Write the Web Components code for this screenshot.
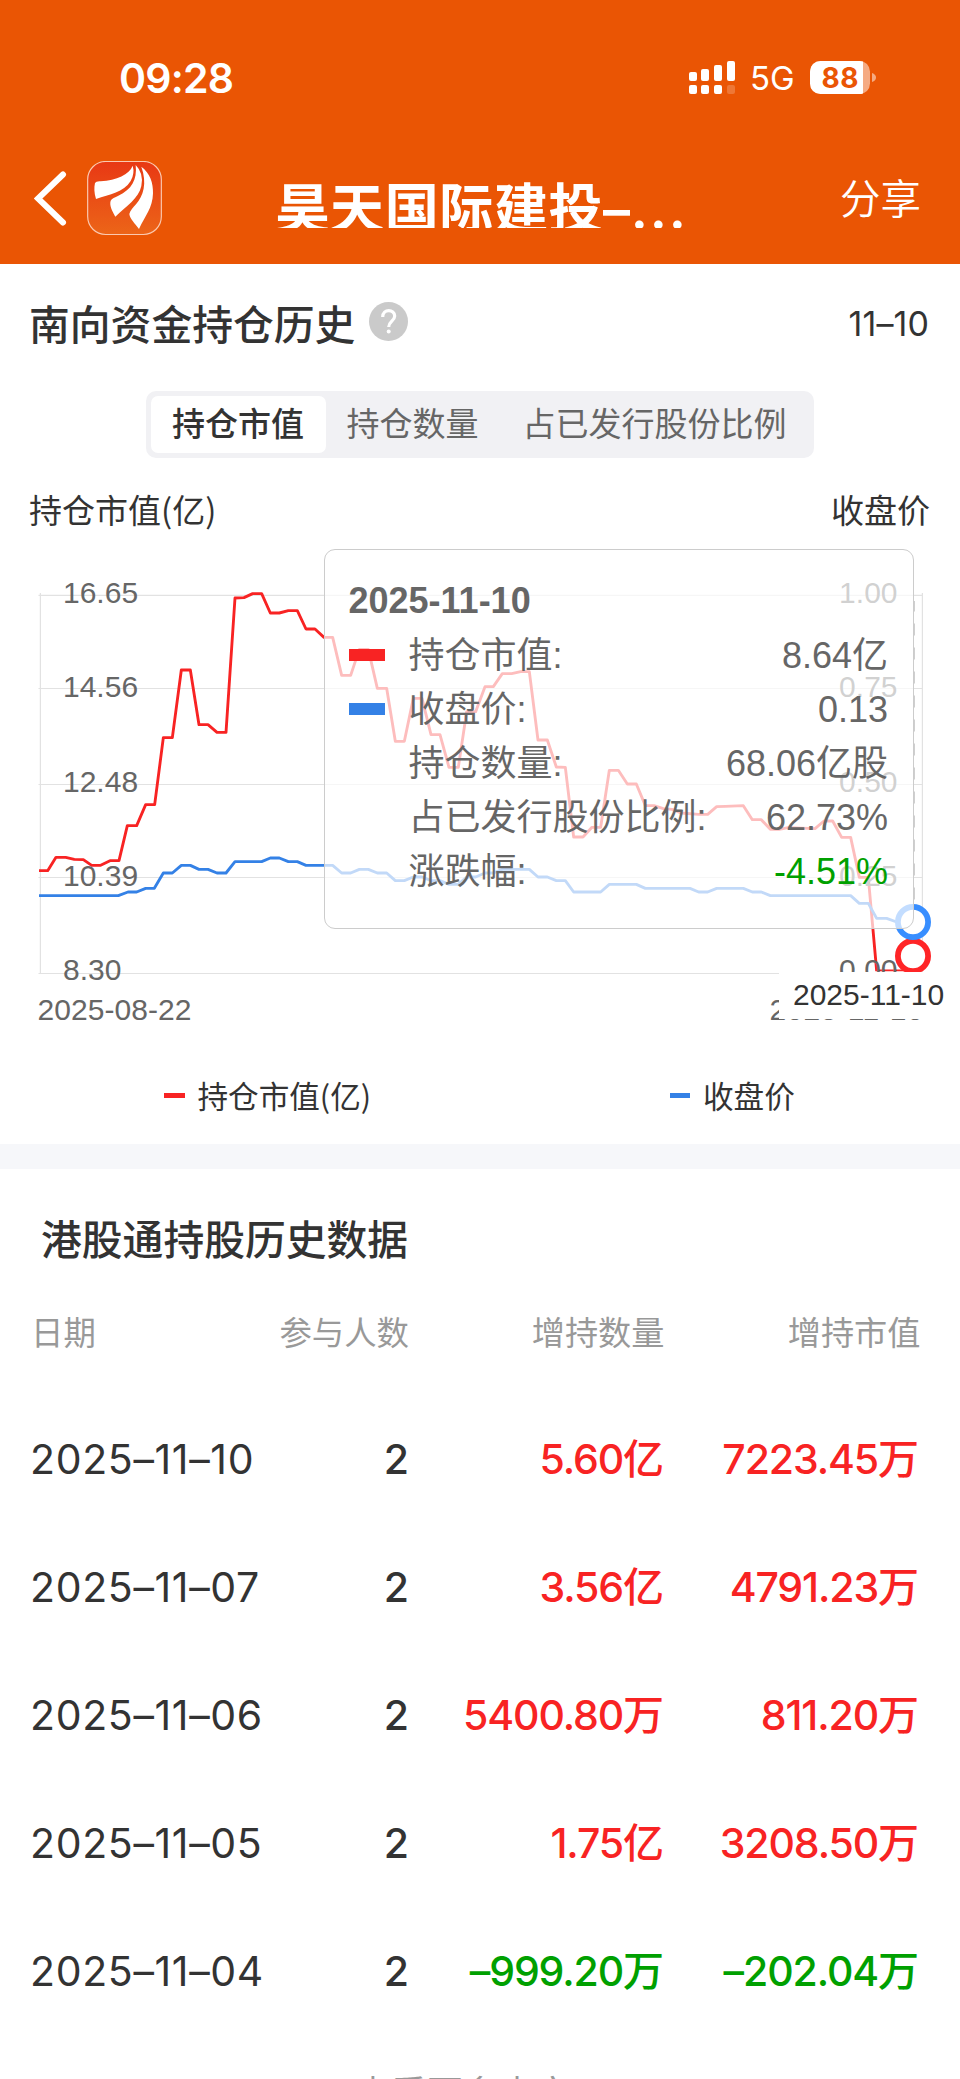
<!DOCTYPE html>
<html lang="zh-CN">
<head>
<meta charset="utf-8">
<title>昊天国际建投</title>
<style>
html,body{margin:0;background:#fff}
body{width:960px;height:2079px;overflow:hidden;font-family:Inter,"Noto Sans CJK SC",sans-serif;color:#333}
</style>
</head>
<body>
<holdings-app></holdings-app>
<script>
const define = (name, html) => customElements.define(name, class extends HTMLElement {
  constructor() {
    super();
    const t = document.createElement('template');
    t.innerHTML = typeof html === 'function' ? html(this) : html;
    this.attachShadow({mode: 'open'}).append(t.content.cloneNode(true));
  }
});

define('status-bar', `
<style>
:host{display:flex;box-sizing:border-box;height:135px;padding:60px 84px 0 119px;align-items:flex-start;color:#fff}
.time{font-size:41px;line-height:36px;font-weight:600;letter-spacing:-.8px;flex:1}
.net{font-size:33px;line-height:37px;margin-left:15px;width:61px}
.sig{width:46px;height:33px;margin-top:1px}
.bat{width:66px;height:33px;margin-top:1px;margin-left:-1px}
svg{display:block}
</style>
<span class="time">09:28</span>
<svg class="sig" viewBox="0 0 46 33" fill="#fff"><rect y="11" width="8" height="9" rx="2"/><rect x="12" y="8" width="8" height="12" rx="2"/><rect x="25" y="4" width="8" height="16" rx="2"/><rect x="38" width="8" height="20" rx="2"/><rect y="24" width="8" height="9" rx="2"/><rect x="12" y="24" width="8" height="9" rx="2"/><rect x="25" y="24" width="8" height="9" rx="2"/><rect x="38" y="24" width="8" height="9" rx="2" opacity=".2"/></svg>
<span class="net">5G</span>
<svg class="bat" viewBox="0 0 66 33"><defs><clipPath id="b"><rect width="53" height="33"/></clipPath></defs><rect width="60" height="33" rx="10.5" fill="#fff" opacity=".5"/><rect width="60" height="33" rx="10.5" fill="#fff" clip-path="url(#b)"/><path d="M62 12q4 1.500 4 4.500t-4 4.500z" fill="#fff" opacity=".5"/><text x="30" y="26.800" text-anchor="middle" font-family="Inter" font-weight="700" font-size="28" textLength="37" fill="#ea5504">88</text></svg>
`);

define('nav-bar', `
<style>
:host{display:flex;height:129px;padding-left:34px;padding-right:39px;color:#fff;align-items:flex-start}
svg{display:block;flex:none}
.back{width:34px;height:60px;margin-top:33px}
.logo{width:75px;height:75px;margin:26px 0 0 19px}
.title{height:47px;overflow:hidden;margin:46px 0 0 113.500px;width:422px;font-size:54px;line-height:57px;font-weight:600;white-space:nowrap;letter-spacing:.6px}
.dots{letter-spacing:1.800px}
.share{margin:45px 0 0 auto;font-size:40.500px;line-height:40px;font-weight:350}
</style>
<svg class="back" viewBox="34 168 34 60"><path d="M63 174.500 38 198.500 63 222.500" fill="none" stroke="#fff" stroke-width="6" stroke-linecap="round" stroke-linejoin="miter"/></svg>
<svg class="logo" viewBox="261 483 225 225"><defs><linearGradient id="g" x2="0" y2="1"><stop stop-color="#e83814"/><stop offset="1" stop-color="#ec6518"/></linearGradient></defs><rect x="263" y="484.500" width="221" height="219" rx="54" fill="url(#g)" stroke="#fbc9b0" stroke-width="3.500"/><g fill="#fff"><path d="M288 597C282 578 282 562 285 549Q288 543 302 544C350 540 388 524 398 497Q405 520 392 543C370 578 330 582 288 597Z"/><path d="M346 650C335 630 328 615 332 602C335 595 345 592 355 587C395 568 412 540 407 495Q432 520 424 558C416 595 380 618 346 650Z"/><path d="M417 687C405 670 390 658 388 642C390 632 400 622 408 613C430 588 442 550 424 500C450 520 460 548 459 580C458 625 435 648 417 687Z"/></g></svg>
<div class="title">昊天国际建投–<span class="dots">...</span></div>
<span class="share">分享</span>
`);

define('section-head', `
<style>
:host{display:flex;height:118px;padding:0 31px 0 29px;align-items:center}
h2{margin:4px 0 0;font-size:40.800px;line-height:50px;font-weight:500}
svg{width:39px;height:39px;margin-left:14px;margin-top:-3px;flex:1 0 39px;max-width:39px}
::slotted([slot=date]){margin-left:auto;font-size:34px;font-weight:400;letter-spacing:.1px}
slot[name=date]{display:block;margin-left:auto}
</style>
<h2><slot></slot></h2>
<svg viewBox="0 0 39 39"><circle cx="19.500" cy="19.500" r="19.500" fill="#cacaca"/><path d="M13.700 15c0-8.700 12-8 12-1 0 5-6 5.500-6 11" fill="none" stroke="#fff" stroke-width="3.200"/><circle cx="19.700" cy="29.500" r="2" fill="#fff"/></svg>
<slot name="date"></slot>
`);

define('segment-tabs', `
<style>
:host{display:block;padding:9px 146px 0 146px}
.bar{display:flex;height:56.500px;padding:5px;background:#f1f1f4;border-radius:10px;font-size:33px;line-height:57px;color:#666}
.bar span{flex:none;text-align:center;text-indent:-1px}
.on{width:175px;background:#fff;border-radius:7px;color:#333;font-weight:500}
.two{width:174px}.three{width:310px}
</style>
<div class="bar"><span class="on">持仓市值</span><span class="two">持仓数量</span><span class="three">占已发行股份比例</span></div>
`);

define('chart-tooltip', `
<style>
:host{position:absolute;left:324px;top:19px;box-sizing:border-box;width:590px;height:380px;border:1.300px solid #ccc;border-radius:11px;background:rgba(255,255,255,.7);padding:24px 25px 0 23.500px;color:#666;font:36px/54px "Liberation Sans","Noto Sans CJK SC",sans-serif}
.t{font-weight:700}
.r{display:flex;height:54px;align-items:center}
i{width:36px;height:12px;margin-right:24px}
.l{padding-top:2px}
.v{margin-left:auto;padding-top:1px}
.g{color:#00a000}
</style>
<div class="t">2025-11-10</div>
<div class="r"><i style="background:#f82323"></i><span class="l">持仓市值:</span><span class="v">8.64亿</span></div>
<div class="r"><i style="background:#3481e6"></i><span class="l">收盘价:</span><span class="v">0.13</span></div>
<div class="r"><i></i><span class="l">持仓数量:</span><span class="v">68.06亿股</span></div>
<div class="r"><i></i><span class="l">占已发行股份比例:</span><span class="v">62.73%</span></div>
<div class="r"><i></i><span class="l">涨跌幅:</span><span class="v g">-4.51%</span></div>
`);

/* Series coordinates are in thirds of a pixel; the origin is 10px below the plot's top. */
const RED = '117,992 143,992 168,952 197,952 223,958 250,959 275,976 302,976 330,962 357,962 382,857 410,857 437,794 464,794 490,593 517,593 544,390 571,390 597,554 624,554 651,577 678,577 705,174 732,173 758,161 785,161 811,219 838,219 865,212 892,212 918,267 945,267 972,292 998,292 1025,406 1052,406 1078,328 1105,328 1132,445 1160,445 1186,604 1213,604 1240,475 1266,475 1293,584 1320,584 1347,682 1375,682 1400,515 1427,515 1455,440 1480,440 1507,401 1535,401 1562,395 1588,395 1614,600 1642,600 1669,681 1696,682 1721,891 1749,891 1776,862 1802,862 1828,691 1855,691 1882,732 1909,732 1936,797 1962,797 1990,806 2016,808 2043,819 2096,823 2123,823 2150,800 2176,799 2230,797 2257,839 2284,839 2311,868 2338,868 2364,863 2445,866 2472,843 2498,843 2525,892 2552,892 2578,1012 2605,1012 2630,1293 2738,1293';
const BLUE = '117,1067 355,1067 384,1056 410,1056 437,1045 463,1045 490,999 517,999 544,976 571,976 597,988 624,988 651,999 678,999 705,965 785,965 811,954 838,954 865,965 892,965 918,976 998,976 1025,999 1052,999 1078,988 1105,988 1132,999 1160,999 1186,1022 1213,1022 1240,1011 1266,1011 1293,1022 1320,1022 1347,1033 1375,1033 1400,1011 1427,1011 1455,999 1480,999 1507,988 1588,988 1614,1011 1642,1011 1669,1022 1696,1022 1721,1056 1802,1056 1828,1033 1909,1033 1936,1045 2070,1045 2096,1056 2123,1056 2150,1045 2230,1045 2257,1056 2284,1056 2311,1067 2552,1067 2578,1090 2605,1090 2630,1135 2660,1135 2690,1146 2738,1146';
const gridY = [65.3, 158.5, 254.5, 347.5, 443.5], labelY = [73, 167, 261.5, 356, 450.3];
const left = ['16.65','14.56','12.48','10.39','8.30'], right = ['1.00','0.75','0.50','0.25','0.00'];

define('trend-chart', `
<style>
:host{display:block;position:relative;height:520px}
svg{display:block;font-family:"Liberation Sans",sans-serif;font-size:30px}
.pointer{position:absolute;left:778.500px;top:441.500px;width:181px;height:47px;background:#fff;font:30px/46px "Liberation Sans",sans-serif;text-indent:14.500px;white-space:nowrap}
</style>
<svg width="960" height="520" viewBox="0 0 960 520">
<defs><clipPath id="c"><rect x="38.500" width="890" height="441.200"/></clipPath></defs>
<g stroke="#e2e2e2" stroke-width="1.200">
${gridY.map(y => `<path d="M38.500 ${y}H922.500"/>`).join('')}
<path d="M40.400 63V443M922.400 63V443"/></g>
<path d="M913.900 71V441" stroke="#c4c4c4" stroke-width="1.800" stroke-dasharray="12 12" stroke-dashoffset="1.500"/>
<g clip-path="url(#c)" fill="none" stroke-linejoin="round"><g transform="translate(0 10) scale(.33333)" stroke-width="8.600">
<polyline points="${RED}" stroke="#f82323"/><polyline points="${BLUE}" stroke="#3481e6"/></g></g>
<g fill="#666">
${left.map((s, i) => `<text x="63" y="${labelY[i]}">${s}</text>`).join('')}
${right.map((s, i) => `<text x="897.500" y="${labelY[i]}" text-anchor="end">${s}</text>`).join('')}
<text x="37.500" y="490" textLength="154">2025-08-22</text><text x="769.500" y="490" textLength="154">2025-11-10</text></g>
<g fill="#fff" stroke-width="5.800"><circle cx="913" cy="426" r="15.100" stroke="#ff2527"/><circle cx="913" cy="392" r="15.100" stroke="#388eff"/></g>
</svg>
<chart-tooltip></chart-tooltip>
<div class="pointer">2025-11-10</div>
`);

define('chart-card', `
<style>
:host{display:block;height:880px}
.axis{display:flex;justify-content:space-between;padding:26px 30px 0 29px;height:46.500px;line-height:51px;font-size:33px}
.legend{display:flex;font-size:30.600px;line-height:40px;height:40px;margin-top:25px;align-items:center}
.legend i{height:5px;width:20.500px;margin-right:13px}
.a{margin-left:164px;background:#f82323}
.b{background:#3481e6}
.legend .par{margin-top:-1px}
.legend span.w{width:472px}
trend-chart{height:520px}
.par{font-family:"Noto Sans CJK SC",sans-serif}
</style>
<section-head>南向资金持仓历史<span slot="date">11–10</span></section-head>
<segment-tabs></segment-tabs>
<div class="axis"><span class="par">持仓市值(亿)</span><span class="par">收盘价</span></div>
<trend-chart></trend-chart>
<div class="legend"><i class="a"></i><span class="par w">持仓市值(亿)</span><i class="b"></i><span class="par">收盘价</span></div>
`);

define('data-row', el => {
  const [d, n, q, v] = el.dataset.v.split('|');
  return `
<style>
:host{display:grid;grid-template-columns:200px 178px 255px 255px;padding-left:30px;height:128px;line-height:128px;font-size:41px;color:${el.dataset.c || '#f82323'};white-space:nowrap}
span{text-align:right;font-weight:500;letter-spacing:-1.100px}
.d{text-align:left;color:#333;font-weight:370;letter-spacing:.65px}
.n{color:#333;font-weight:550}
</style><span class="d">${d}</span><span class="n">${n}</span><span>${q}</span><span>${v}</span>`;
});

define('history-table', `
<style>
:host{display:block}
.gap{height:25px;background:#f6f7fa}
h2{margin:0;padding:43px 0 0 41px;height:87px;font-size:40.800px;line-height:56px;font-weight:500}
.cols{display:grid;grid-template-columns:200px 178px 255.500px 256px;padding-left:31px;height:96px;line-height:69px;font-size:33.200px;color:#999}
.cols span{text-align:right}
.cols span:nth-child(-n+2){font-size:32.400px}
.cols span:first-child{text-align:left}
.more{margin-top:33px;padding-left:355px;font-size:36px;line-height:52px;color:#999}
</style>
<div class="gap"></div>
<h2>港股通持股历史数据</h2>
<div class="cols"><span>日期</span><span>参与人数</span><span>增持数量</span><span>增持市值</span></div>
<data-row data-v="2025–11–10|2|5.60亿|7223.45万"></data-row>
<data-row data-v="2025–11–07|2|3.56亿|4791.23万"></data-row>
<data-row data-v="2025–11–06|2|5400.80万|811.20万"></data-row>
<data-row data-v="2025–11–05|2|1.75亿|3208.50万"></data-row>
<data-row data-c="#00a000" data-v="2025–11–04|2|–999.20万|–202.04万"></data-row>
<div class="more">查看更多内容</div>
`);

define('holdings-app', `
<style>:host{display:block;width:960px;height:2079px;overflow:hidden}header{background:#ea5504;height:264px}</style>
<header><status-bar></status-bar><nav-bar></nav-bar></header>
<chart-card></chart-card>
<history-table></history-table>
`);
</script>
</body>
</html>
